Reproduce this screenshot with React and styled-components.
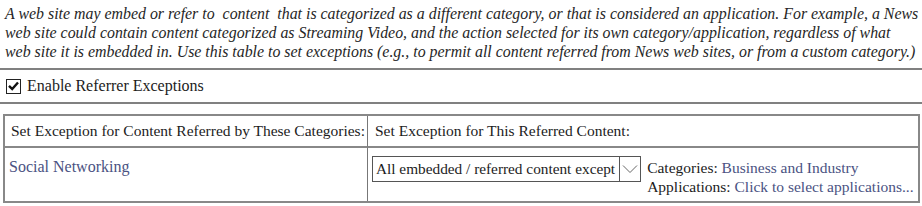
import React from "react";
import styled, { createGlobalStyle } from "styled-components";

const Global = createGlobalStyle`
  html, body { margin: 0; padding: 0; background: #fff; }
  body { font-family: "Liberation Serif", "Times New Roman", serif; color: #1c1c1c; }
`;

const Page = styled.div`
  width: 922px;
  display: flex;
  flex-direction: column;
`;

const Intro = styled.p`
  margin: 4px 0 0;
  padding: 0 5px;
  font-style: italic;
  font-size: 15.9px;
  line-height: 19px;
  color: #262626;
  white-space: pre;
`;

const Divider = styled.div`
  height: 0;
  border-top: 2px solid #808080;
  margin-top: ${(p) => p.$top || 0}px;
`;

const CheckRow = styled.label`
  display: flex;
  align-items: center;
  gap: 6px;
  height: 32px;
  padding-left: 6px;
  font-size: 16px;
`;

const Box = styled.span`
  width: 13px;
  height: 13px;
  border: 1.5px solid #222;
  display: flex;
  align-items: center;
  justify-content: center;
`;

const Table = styled.div`
  margin: 10px 2px 0 3px;
  border: 2px solid #888;
  display: grid;
  grid-template-columns: 362px 1fr;
`;

const HeadCell = styled.div`
  height: 30px;
  display: flex;
  align-items: center;
  padding-left: ${(p) => p.$pad}px;
  font-size: 15.5px;
  white-space: nowrap;
  border-bottom: 2px solid #888;
  border-left: ${(p) => (p.$divide ? "1px solid #777" : "none")};
`;

const BodyCell = styled.div`
  height: 53px;
  box-sizing: border-box;
  padding: ${(p) => p.$pt}px 0 0 ${(p) => p.$pad}px;
  border-left: ${(p) => (p.$divide ? "1px solid #777" : "none")};
  display: flex;
  align-items: flex-start;
  gap: 6px;
`;

const Link = styled.span`
  color: #4a5282;
  font-size: ${(p) => p.$size || 16}px;
`;

const Select = styled.div`
  display: flex;
  height: 24px;
  border: 1px solid #555;
  font-size: 15.3px;
`;

const SelectText = styled.span`
  padding: 0 4px 0 3px;
  line-height: 24px;
  white-space: nowrap;
`;

const SelectBtn = styled.span`
  width: 20px;
  border-left: 1px solid #555;
  display: flex;
  align-items: center;
  justify-content: center;
`;

const Details = styled.div`
  font-size: 15.5px;
  line-height: 19px;
  margin-top: 2px;
  white-space: nowrap;
`;

export default function App() {
  return (
    <Page>
      <Global />
      <Intro>
        {"A web site may embed or refer to  content  that is categorized as a different category, or that is considered an application. For example, a News\nweb site could contain content categorized as Streaming Video, and the action selected for its own category/application, regardless of what\nweb site it is embedded in. Use this table to set exceptions (e.g., to permit all content referred from News web sites, or from a custom category.)"}
      </Intro>
      <Divider $top={7} />
      <CheckRow>
        <Box>
          <svg width="11" height="10" viewBox="0 0 11 10">
            <path d="M1 4.8 L4.2 8 L10 1.5" fill="none" stroke="#111" strokeWidth="2.4" />
          </svg>
        </Box>
        Enable Referrer Exceptions
      </CheckRow>
      <Divider />
      <Table>
        <HeadCell $pad={6}>Set Exception for Content Referred by These Categories:</HeadCell>
        <HeadCell $pad={7} $divide>Set Exception for This Referred Content:</HeadCell>
        <BodyCell $pad={4} $pt={10}>
          <Link>Social Networking</Link>
        </BodyCell>
        <BodyCell $pad={4} $pt={8} $divide>
          <Select>
            <SelectText>All embedded / referred content except</SelectText>
            <SelectBtn>
              <svg width="16" height="10" viewBox="0 0 16 10">
                <path d="M1 1.5 L8 8.5 L15 1.5" fill="none" stroke="#666" strokeWidth="1" />
              </svg>
            </SelectBtn>
          </Select>
          <Details>
            <div>
              Categories: <Link $size={15.5}>Business and Industry</Link>
            </div>
            <div>
              Applications: <Link $size={15.5}>Click to select applications...</Link>
            </div>
          </Details>
        </BodyCell>
      </Table>
    </Page>
  );
}
